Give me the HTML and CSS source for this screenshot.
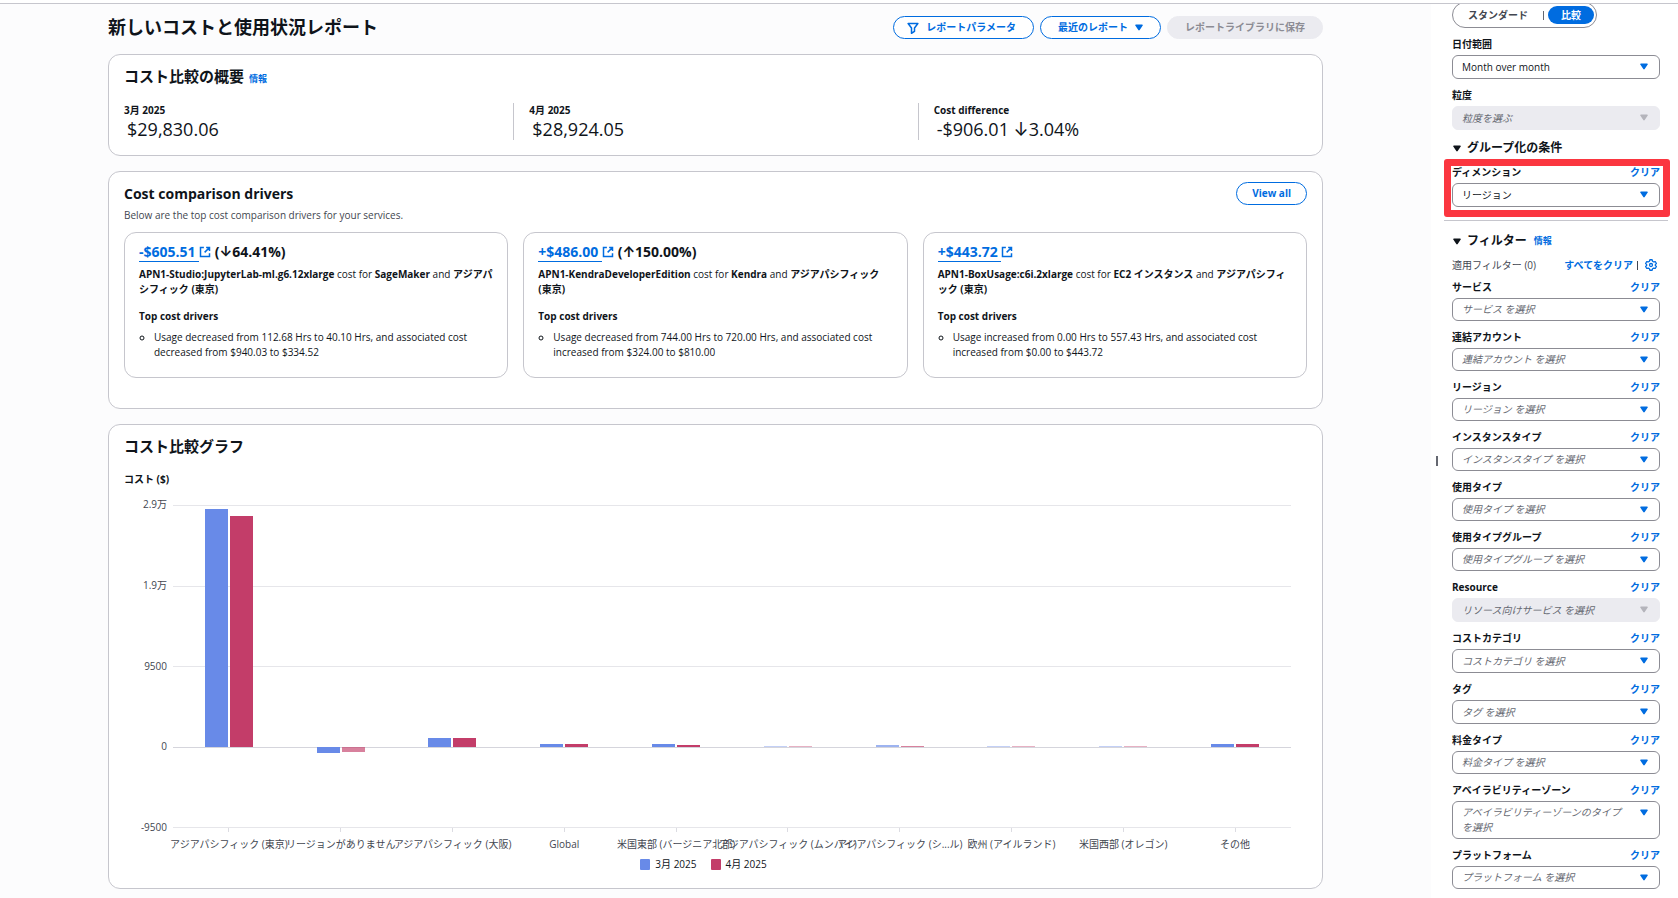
FILE: index.html
```html
<!DOCTYPE html>
<html lang="ja">
<head>
	<meta charset="utf-8">
	<title>新しいコストと使用状況レポート</title>
	<link rel="stylesheet" href="styles.css">
</head>
<body>
	<svg class="sprite" aria-hidden="true">
		<symbol id="caret" viewBox="0 0 8 7"><path d="M1 .5h6c.7 0 1.100.6.7 1.100L4.700 6c-.4.5-1 .5-1.400 0L.3 1.600C-.1 1.100.3.5 1 .5z" fill="currentColor"/></symbol>
		<symbol id="filter" viewBox="0 0 16 16"><path d="M1.500 2h13L10 8v4.500L6 15V8z" fill="none" stroke="currentColor" stroke-width="2" stroke-linejoin="round"/></symbol>
		<symbol id="external" viewBox="0 0 16 16"><path d="M6.500 2H2v12h12V9.500M9.500 2H14v4.500M14 2 7.500 8.500" fill="none" stroke="currentColor" stroke-width="2"/></symbol>
		<symbol id="gear" viewBox="0 0 16 16"><path d="M6.500 1h3l.6 2 1.500.9 2.100-.5 1.500 2.600L13.700 7.500v1l1.500 1.500-1.500 2.600-2.100-.5-1.500.9-.6 2h-3l-.6-2-1.500-.9-2.100.5L.8 10l1.500-1.500v-1L.8 6l1.500-2.600 2.100.5L5.900 3z" fill="none" stroke="currentColor" stroke-width="1.700" stroke-linejoin="round"/><circle cx="8" cy="8" r="2" fill="none" stroke="currentColor" stroke-width="1.700"/></symbol>
	</svg>
	<div class="topline"></div>
	<div class="layout">
		<main class="main">
			<header class="page-header">
				<h1>新しいコストと使用状況レポート</h1>
				<div class="actions">
					<button type="button" class="btn"><svg class="icon"><use href="#filter"/></svg>レポートパラメータ</button>
					<button type="button" class="btn">最近のレポート<svg class="caret"><use href="#caret"/></svg></button>
					<button type="button" class="btn" disabled>レポートライブラリに保存</button>
				</div>
			</header>

			<section class="card">
				<h2>コスト比較の概要 <a href="#" class="info">情報</a></h2>
				<dl class="summary">
					<div><dt>3月 2025</dt><dd>$29,830.06</dd></div>
					<div><dt>4月 2025</dt><dd>$28,924.05</dd></div>
					<div><dt>Cost difference</dt><dd>-$906.01 <span class="arrow">↓</span>3.04%</dd></div>
				</dl>
			</section>

			<section class="card card-drivers">
				<div class="card-header">
					<div>
						<h2>Cost comparison drivers</h2>
						<p class="description">Below are the top cost comparison drivers for your services.</p>
					</div>
					<button type="button" class="btn">View all</button>
				</div>
				<div class="drivers">
					<article class="driver">
						<h3><a href="#"><span>-$605.51 </span><svg class="icon"><use href="#external"/></svg></a> (<span class="arrow">↓</span>64.41%)</h3>
						<p><b>APN1-Studio:JupyterLab-ml.g6.12xlarge</b> cost for <b>SageMaker</b> and <b>アジアパシフィック (東京)</b></p>
						<h4>Top cost drivers</h4>
						<ul>
							<li>Usage decreased from 112.68 Hrs to 40.10 Hrs, and associated cost decreased from $940.03 to $334.52</li>
						</ul>
					</article>
					<article class="driver">
						<h3><a href="#"><span>+$486.00 </span><svg class="icon"><use href="#external"/></svg></a> (<span class="arrow">↑</span>150.00%)</h3>
						<p><b>APN1-KendraDeveloperEdition</b> cost for <b>Kendra</b> and <b>アジアパシフィック (東京)</b></p>
						<h4>Top cost drivers</h4>
						<ul>
							<li>Usage decreased from 744.00 Hrs to 720.00 Hrs, and associated cost increased from $324.00 to $810.00</li>
						</ul>
					</article>
					<article class="driver">
						<h3><a href="#"><span>+$443.72 </span><svg class="icon"><use href="#external"/></svg></a></h3>
						<p><b>APN1-BoxUsage:c6i.2xlarge</b> cost for <b>EC2 インスタンス</b> and <b>アジアパシフィック (東京)</b></p>
						<h4>Top cost drivers</h4>
						<ul>
							<li>Usage increased from 0.00 Hrs to 557.43 Hrs, and associated cost increased from $0.00 to $443.72</li>
						</ul>
					</article>
				</div>
			</section>

			<section class="card">
				<h2>コスト比較グラフ</h2>
				<h4 class="axis-title">コスト ($)</h4>
				<div class="chart">
					<div class="y-axis"><span>2.9万</span><span>1.9万</span><span>9500</span><span>0</span><span>-9500</span></div>
					<div class="plot">
						<div class="grid"><i></i><i></i><i class="zero"></i><i></i></div>
						<div class="bands">
							<div class="band"><div class="up"><i class="mar" style="height: 98.500%"></i><i class="apr" style="height: 95.400%"></i></div><div class="down"></div></div>
							<div class="band"><div class="up"></div><div class="down"><i class="mar" style="height: 7%"></i><i class="apr soft" style="height: 6%"></i></div></div>
							<div class="band"><div class="up"><i class="mar" style="height: 4%"></i><i class="apr" style="height: 3.900%"></i></div><div class="down"></div></div>
							<div class="band"><div class="up"><i class="mar" style="height: 1.400%"></i><i class="apr" style="height: 1.300%"></i></div><div class="down"></div></div>
							<div class="band"><div class="up"><i class="mar" style="height: 1.200%"></i><i class="apr" style="height: 1.100%"></i></div><div class="down"></div></div>
							<div class="band"><div class="up"><i class="mar faint" style="height: .4%"></i><i class="apr faint" style="height: .4%"></i></div><div class="down"></div></div>
							<div class="band"><div class="up"><i class="mar soft" style="height: .8%"></i><i class="apr soft" style="height: .7%"></i></div><div class="down"></div></div>
							<div class="band"><div class="up"><i class="mar faint" style="height: .4%"></i><i class="apr faint" style="height: .4%"></i></div><div class="down"></div></div>
							<div class="band"><div class="up"><i class="mar faint" style="height: .4%"></i><i class="apr faint" style="height: .4%"></i></div><div class="down"></div></div>
							<div class="band"><div class="up"><i class="mar" style="height: 1.500%"></i><i class="apr" style="height: 1.400%"></i></div><div class="down"></div></div>
						</div>
					</div>
					<div class="x-axis">
						<span>アジアパシフィック (東京)</span>
						<span>リージョンがありません</span>
						<span>アジアパシフィック (大阪)</span>
						<span>Global</span>
						<span>米国東部 (バージニア北部)</span>
						<span>アジアパシフィック (ムンバイ)</span>
						<span>アジアパシフィック (シ...ル)</span>
						<span>欧州 (アイルランド)</span>
						<span>米国西部 (オレゴン)</span>
						<span>その他</span>
					</div>
				</div>
				<div class="legend">
					<span><i class="mar"></i>3月 2025</span>
					<span><i class="apr"></i>4月 2025</span>
				</div>
			</section>
		</main>

		<div class="handle"></div>

		<aside class="side">
			<div class="segments">
				<button type="button">スタンダード</button>
				<button type="button" class="selected">比較</button>
			</div>
			<div class="field">
				<label for="range">日付範囲</label>
				<div class="select tall"><select id="range" class="filled"><option>Month over month</option></select><svg class="caret"><use href="#caret"/></svg></div>
			</div>
			<div class="field">
				<label for="granularity">粒度</label>
				<div class="select tall"><select id="granularity" disabled><option>粒度を選ぶ</option></select><svg class="caret"><use href="#caret"/></svg></div>
			</div>
			<h3 class="group-title"><svg class="caret"><use href="#caret"/></svg>グループ化の条件</h3>
			<div class="field highlight">
				<label for="dimension">ディメンション</label><button type="button" class="clear">クリア</button>
				<div class="select tall"><select id="dimension" class="filled"><option>リージョン</option></select><svg class="caret"><use href="#caret"/></svg></div>
			</div>
			<hr>
			<h3 class="group-title"><svg class="caret"><use href="#caret"/></svg>フィルター <a href="#" class="info">情報</a></h3>
			<div class="applied">
				<span>適用フィルター (0)</span>
				<button type="button" class="clear">すべてをクリア</button>
				<i class="sep"></i>
				<button type="button" class="clear" aria-label="設定"><svg class="gear"><use href="#gear"/></svg></button>
			</div>
			<div class="field">
				<label for="service">サービス</label><button type="button" class="clear">クリア</button>
				<div class="select"><select id="service"><option>サービス を選択</option></select><svg class="caret"><use href="#caret"/></svg></div>
			</div>
			<div class="field">
				<label for="account">連結アカウント</label><button type="button" class="clear">クリア</button>
				<div class="select"><select id="account"><option>連結アカウント を選択</option></select><svg class="caret"><use href="#caret"/></svg></div>
			</div>
			<div class="field">
				<label for="region">リージョン</label><button type="button" class="clear">クリア</button>
				<div class="select"><select id="region"><option>リージョン を選択</option></select><svg class="caret"><use href="#caret"/></svg></div>
			</div>
			<div class="field">
				<label for="instance">インスタンスタイプ</label><button type="button" class="clear">クリア</button>
				<div class="select"><select id="instance"><option>インスタンスタイプ を選択</option></select><svg class="caret"><use href="#caret"/></svg></div>
			</div>
			<div class="field">
				<label for="usage">使用タイプ</label><button type="button" class="clear">クリア</button>
				<div class="select"><select id="usage"><option>使用タイプ を選択</option></select><svg class="caret"><use href="#caret"/></svg></div>
			</div>
			<div class="field">
				<label for="usage-group">使用タイプグループ</label><button type="button" class="clear">クリア</button>
				<div class="select"><select id="usage-group"><option>使用タイプグループ を選択</option></select><svg class="caret"><use href="#caret"/></svg></div>
			</div>
			<div class="field">
				<label for="resource">Resource</label><button type="button" class="clear">クリア</button>
				<div class="select tall"><select id="resource" disabled><option>リソース向けサービス を選択</option></select><svg class="caret"><use href="#caret"/></svg></div>
			</div>
			<div class="field">
				<label for="category">コストカテゴリ</label><button type="button" class="clear">クリア</button>
				<div class="select tall"><select id="category"><option>コストカテゴリ を選択</option></select><svg class="caret"><use href="#caret"/></svg></div>
			</div>
			<div class="field">
				<label for="tag">タグ</label><button type="button" class="clear">クリア</button>
				<div class="select tall"><select id="tag"><option>タグ を選択</option></select><svg class="caret"><use href="#caret"/></svg></div>
			</div>
			<div class="field">
				<label for="charge">料金タイプ</label><button type="button" class="clear">クリア</button>
				<div class="select"><select id="charge"><option>料金タイプ を選択</option></select><svg class="caret"><use href="#caret"/></svg></div>
			</div>
			<div class="field">
				<label for="zone">アベイラビリティーゾーン</label><button type="button" class="clear">クリア</button>
				<div class="select wrap"><select id="zone"><option>アベイラビリティーゾーンのタイプ を選択</option></select><svg class="caret"><use href="#caret"/></svg></div>
			</div>
			<div class="field">
				<label for="platform">プラットフォーム</label><button type="button" class="clear">クリア</button>
				<div class="select"><select id="platform"><option>プラットフォーム を選択</option></select><svg class="caret"><use href="#caret"/></svg></div>
			</div>
		</aside>
	</div>
</body>
</html>
```
FILE: styles.css
```css
* {
	box-sizing: border-box;
}
body {
	margin: 0;
	background: #fff;
	color: #0f141a;
	font: 10px/15px "Open Sans", "Liberation Sans", "Noto Sans CJK JP", sans-serif;
}
h1, h2, h3, h4, p, ul, dl, dd {
	margin: 0;
	padding: 0;
}
a {
	color: #006ce0;
	text-decoration: none;
}
button, select {
	font: inherit;
	color: inherit;
	margin: 0;
}
button {
	background: none;
	border: 0;
	padding: 0;
}
.sprite {
	display: none;
}
.topline {
	height: 4px;
	border-bottom: 1px solid #c6c6cd;
}
.layout {
	display: flex;
	min-height: calc(100vh - 4px);
}

/* main column */
.main {
	flex: 1;
	min-width: 0;
	padding: 12px 108px 9px;
	background: #fcfcfd;
	display: flex;
	flex-direction: column;
	gap: 15px;
}
.page-header {
	display: flex;
	justify-content: space-between;
	align-items: center;
	height: 23px;
}
h1 {
	font-size: 18px;
	line-height: 23px;
}
h2 {
	font-size: 15px;
	line-height: 20px;
}
h4 {
	font-size: 10px;
	line-height: 15px;
}
.info {
	font-size: 9px;
	font-weight: 700;
	margin-left: 1px;
}
.actions {
	display: flex;
	gap: 6px;
}
.btn {
	display: flex;
	align-items: center;
	gap: 7px;
	height: 23px;
	padding: 0 15px;
	border: 1px solid #006ce0;
	border-radius: 12px;
	background: #fff;
	color: #006ce0;
	font-weight: 700;
	white-space: nowrap;
}
.actions .btn {
	padding: 0 17px;
}
.btn:disabled {
	background: #ebebf0;
	border-color: #ebebf0;
	color: #8c8c94;
}
.icon {
	width: 12px;
	height: 12px;
}
.btn .icon {
	margin-left: -4px;
}
.caret {
	width: 8px;
	height: 7px;
}
.arrow {
	font-family: Inter, sans-serif;
	line-height: 1;
}
.card {
	padding: 11px 15px 16px;
	border: 1px solid #c6c6cd;
	border-radius: 12px;
	background: #fff;
}
.summary {
	display: grid;
	grid-template-columns: repeat(3, 1fr);
	margin: 14px -15px -1px;
}
.summary div {
	height: 37px;
	padding: 0 15px;
}
.summary div + div {
	border-left: 1px solid #c6c6cd;
}
.summary dt {
	font-weight: 700;
}
.summary dd {
	padding-left: 3px;
	font-size: 18px;
	line-height: 22px;
}

/* drivers */
.card-drivers {
	padding-top: 10px;
	padding-bottom: 30px;
}
.card-header {
	display: flex;
	justify-content: space-between;
	align-items: flex-start;
}
.card-header h2 {
	font-size: 14px;
	line-height: 24px;
}
.description {
	margin-top: 2px;
	color: #424650;
}
.drivers {
	display: grid;
	grid-template-columns: repeat(3, 1fr);
	gap: 15px;
	margin-top: 9px;
}
.driver {
	padding: 9px 13px 17px 14px;
	border: 1px solid #c6c6cd;
	border-radius: 12px;
}
.driver h3 {
	font-size: 14px;
	line-height: 20px;
	margin-bottom: 5px;
}
.driver a span {
	border-bottom: 1px solid #006ce0;
	white-space: pre;
}
.driver h3 .icon {
	vertical-align: -1px;
}
.driver h4 {
	margin: 12px 0 6px;
}
.driver ul {
	padding-left: 15px;
	list-style: circle;
}

/* chart */
.axis-title {
	margin: 16px 0 10px;
}
.chart {
	display: grid;
	grid-template-columns: 43px 1fr;
	column-gap: 6px;
	padding-right: 16px;
}
.y-axis {
	display: flex;
	flex-direction: column;
	justify-content: space-between;
	height: 338px;
	margin-bottom: -7px;
	text-align: right;
	color: #424650;
}
.plot {
	display: grid;
	height: 323px;
	margin-top: 8px;
}
.grid, .bands {
	grid-area: 1 / 1;
}
.grid {
	display: grid;
	grid-template-rows: repeat(4, 1fr);
	border-top: 1px solid #e6e6ea;
}
.grid i {
	border-bottom: 1px solid #e6e6ea;
}
.grid .zero {
	border-color: #d5d5dc;
}
.bands {
	display: flex;
}
.band {
	flex: 1;
	display: grid;
	grid-template-rows: 3fr 1fr;
}
.up, .down {
	display: flex;
	justify-content: center;
	gap: 2px;
}
.up {
	align-items: flex-end;
}
.band i {
	width: 23px;
}
.mar {
	background: #688ae8;
}
.apr {
	background: #c33d69;
}
.soft {
	opacity: .65;
}
.faint {
	opacity: .4;
}
.x-axis {
	grid-column: 2;
	display: flex;
	color: #424650;
}
.x-axis span {
	flex: 1;
	width: 0;
	display: flex;
	flex-direction: column;
	align-items: center;
	white-space: nowrap;
}
.x-axis span::before {
	content: "";
	width: 1px;
	height: 4px;
	margin-bottom: 5px;
	background: #dcdce2;
}
.legend {
	display: flex;
	justify-content: center;
	gap: 14px;
	margin-top: 5px;
	padding-right: 24px;
}
.legend span {
	display: flex;
	align-items: center;
	gap: 5px;
}
.legend i {
	width: 10px;
	height: 11px;
	border-radius: 1px;
}

/* side panel */
.handle {
	align-self: center;
	width: 2px;
	height: 10px;
	margin: 12px 0 0 5px;
	background: #656871;
}
.side {
	flex: none;
	width: 240px;
	padding: 0 18px 8px 14px;
	overflow: hidden;
}
.segments {
	display: flex;
	align-items: center;
	width: 145px;
	height: 26px;
	margin: -2px 0 8px;
	padding: 0 2px 0 15px;
	border: 1px solid #8c8c94;
	border-radius: 13px;
	color: #424650;
	font-weight: 700;
}
.segments button:first-child {
	flex: 1;
	text-align: left;
}
.segments .selected {
	width: 46px;
	height: 18px;
	border-radius: 9px;
	background: #006ce0;
	color: #fff;
}
.segments .selected::before {
	content: "";
	float: left;
	width: 1px;
	height: 9px;
	margin: 3px 0 0 -5px;
	background: #656871;
}
.field {
	display: grid;
	grid-template-columns: 1fr auto;
	row-gap: 3px;
	line-height: 16px;
	margin-bottom: 8px;
}
.field label {
	font-weight: 700;
}
.clear {
	color: #006ce0;
	font-weight: 700;
}
.select {
	grid-column: 1 / 3;
	display: grid;
	position: relative;
}
.select select {
	appearance: none;
	width: 100%;
	height: 23px;
	padding: 0 30px 0 9px;
	border: 1px solid #8c8c94;
	border-radius: 6px;
	background: #fff;
	color: #656871;
	font-style: italic;
	line-height: 15px;
}
.select.tall select {
	height: 24px;
}
.select.wrap select {
	height: 38px;
	white-space: normal;
}
.select .filled {
	color: #0f141a;
	font-style: normal;
}
.select select:disabled {
	border-color: #ebebf0;
	background: #ebebf0;
	opacity: 1;
}
.select .caret {
	position: absolute;
	top: 8px;
	right: 12px;
	color: #006ce0;
	pointer-events: none;
}
.select select:disabled + .caret {
	color: #b4b4bb;
}
.group-title {
	display: flex;
	align-items: center;
	margin: 9px 0 7px;
	font-size: 12px;
	line-height: 18px;
}
.group-title .caret {
	margin: 0 6px 0 1px;
}
.group-title .info {
	margin-left: 7px;
}
.highlight {
	position: relative;
	margin-bottom: 13px;
}
/* frame drawn over the field and its neighbours */
.highlight::after {
	content: "";
	position: absolute;
	inset: -5px -10px -10px -8px;
	border: 7px solid #fb3640;
	border-radius: 3px;
	pointer-events: none;
}
.side hr {
	margin: 0 -8px 11px;
	border: 0;
	border-top: 1px solid #c6c6cd;
}
.applied {
	display: flex;
	align-items: center;
	margin: 7px 0 6px;
	line-height: 16px;
	color: #424650;
}
.applied span {
	flex: 1;
}
.sep {
	width: 1px;
	height: 9px;
	margin: 0 7px 0 4px;
	background: #424650;
}
.gear {
	display: block;
	width: 12px;
	height: 12px;
	margin-right: 3px;
}
```
